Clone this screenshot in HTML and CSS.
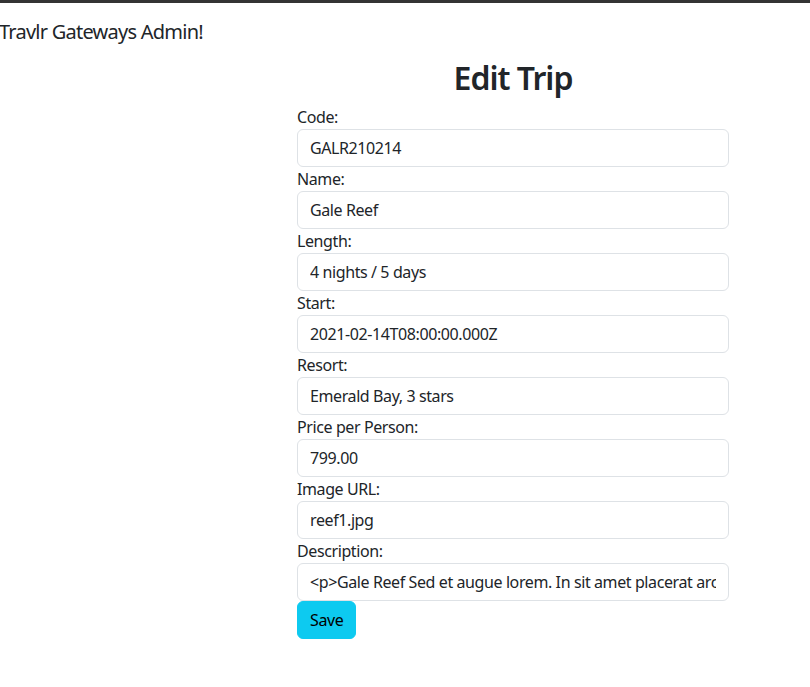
FILE: index.html
```html
<!DOCTYPE html>
<html>
<head>
<meta charset="utf-8">
<title>Travlr Gateways Admin</title>
<link rel="stylesheet" href="styles.css">
</head>
<body>
<div class="topbar"></div>
<header class="brand">Travlr Gateways Admin!</header>
<main class="form-wrap">
  <h1 class="title">Edit Trip</h1>
  <form class="trip-form">
    <label class="field-label">Code:</label>
    <input class="field" type="text" value="GALR210214">
    <label class="field-label">Name:</label>
    <input class="field" type="text" value="Gale Reef">
    <label class="field-label">Length:</label>
    <input class="field" type="text" value="4 nights / 5 days">
    <label class="field-label">Start:</label>
    <input class="field" type="text" value="2021-02-14T08:00:00.000Z">
    <label class="field-label">Resort:</label>
    <input class="field" type="text" value="Emerald Bay, 3 stars">
    <label class="field-label">Price per Person:</label>
    <input class="field" type="text" value="799.00">
    <label class="field-label">Image URL:</label>
    <input class="field" type="text" value="reef1.jpg">
    <label class="field-label">Description:</label>
    <input class="field" type="text" value="<p>Gale Reef Sed et augue lorem. In sit amet placerat arcu. Mauris volutpat ipsum ac justo mollis vel vestibulum orci gravida.</p>">
    <div class="actions"><button class="btn-save" type="button">Save</button></div>
  </form>
</main>
</body>
</html>
```

FILE: styles.css
```css
html, body {
  margin: 0;
  padding: 0;
  background: #fff;
}
body {
  font-family: "Noto Sans", "Open Sans", sans-serif;
  color: #212529;
  font-size: 16px;
  line-height: 1.5;
  letter-spacing: -0.4px;
}
.topbar {
  height: 3px;
  background: #343434;
}
.brand {
  font-size: 20px;
  line-height: 30px;
  padding-top: 14px;
  margin-left: -1px;
  letter-spacing: -0.75px;
  color: #212529;
}
.form-wrap {
  width: 432px;
  margin-left: 297px;
}
.title {
  margin: 11px 0 7px;
  font-size: 32px;
  line-height: 40px;
  font-weight: 600;
  letter-spacing: -1px;
  text-align: center;
}
.trip-form {
  display: flex;
  flex-direction: column;
}
.field-label {
  display: block;
  line-height: 24px;
  font-size: 16px;
}
.field {
  display: block;
  box-sizing: border-box;
  width: 100%;
  height: 38px;
  padding: 6px 12px;
  font-family: inherit;
  font-size: 16px;
  line-height: 24px;
  letter-spacing: -0.4px;
  color: #212529;
  background: #fff;
  border: 1px solid #dee2e6;
  border-radius: 6px;
  outline: none;
}
.actions {
  display: flex;
}
.btn-save {
  height: 38px;
  padding: 6px 12px;
  font-family: inherit;
  font-size: 16px;
  line-height: 24px;
  letter-spacing: -0.4px;
  color: #000;
  background: #0dcaf0;
  border: 1px solid #0dcaf0;
  border-radius: 6px;
}
```
